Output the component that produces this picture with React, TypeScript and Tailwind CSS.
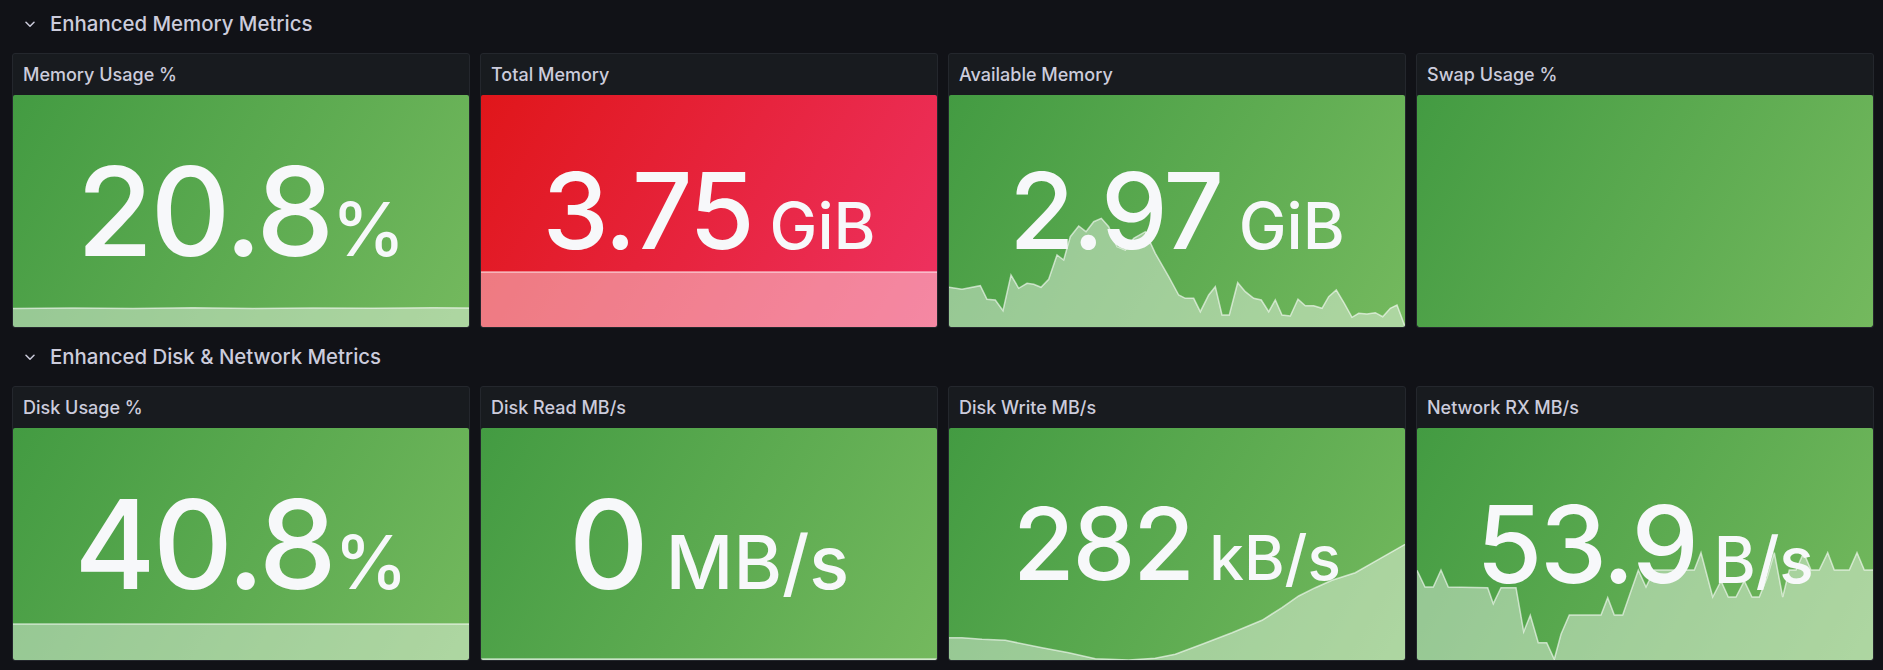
import React from "react";

const W = 456;
const H = 232;
type Pt = [number, number];

const availPts: Pt[] = [
  [0, 192.3], [13, 194.3], [31.3, 190.7], [38, 204.3], [46.3, 205], [54, 215.7], [62, 180], [69.7, 193.3],
  [78, 188.3], [84.7, 189.3], [92, 192.3], [99.7, 184.3], [108, 160], [114.7, 165], [121.3, 141.7],
  [129.7, 131], [137, 136.7], [144.7, 126.7], [152.3, 123.3], [159.7, 131.7], [168, 151.7], [176.3, 155],
  [184.7, 143.3], [196.3, 136.7], [206.3, 158.3], [219.7, 181.7], [229.7, 200], [236.3, 203.3],
  [244.7, 203.3], [251.3, 216.7], [259.7, 200], [266.3, 191.7], [273, 220], [280.3, 220], [288.7, 187.7],
  [296.3, 196.7], [304.7, 203.3], [312.3, 205], [319.7, 216.7], [326.3, 205], [333, 220], [341.3, 221],
  [349, 204.3], [356.3, 210.7], [364.7, 210.7], [373, 213.3], [379.7, 201.7], [387.3, 195], [395.3, 208.3],
  [403, 222.3], [409.7, 218.3], [418, 219], [426.3, 217.7], [433.7, 221.7], [441.3, 213.3], [448, 210],
  [456, 231.5],
];

const writePts: Pt[] = [
  [0, 209.7], [13, 209.7], [33, 211.3], [56.3, 212.3], [93, 219.7], [119.7, 224.7], [146.3, 230.7],
  [179.7, 232], [206.3, 230.3], [226.3, 226.3], [253, 216.3], [283, 204.7], [313, 192.3], [333, 179.7],
  [349.7, 168], [366.3, 159.7], [383, 152.3], [406.3, 144.7], [429.7, 131.3], [456, 116.3],
];

const netPts: Pt[] = [
  [0, 142.3], [8, 159], [16.3, 159], [24, 142], [31.3, 159], [70.7, 159.7], [76.3, 175.7], [84, 159.7],
  [99, 159.7], [106.7, 203.7], [113.3, 187.3], [121.3, 214.7], [129.7, 214.7], [137.3, 231.3], [144, 206.3],
  [152.3, 187], [184, 187], [190.7, 169.7], [197.3, 187], [205.7, 187], [214, 163], [221.3, 142.3],
  [229, 159], [237.3, 142], [250.7, 142], [267.3, 142], [277.3, 142], [284, 124.7], [295.7, 169],
  [304, 153], [311.3, 169], [319, 169], [327.3, 153], [335, 169], [342.3, 169], [350, 149.7], [357.3, 124.7],
  [365.7, 169], [372.3, 142], [379, 142], [386.7, 124.7], [394, 142], [402.3, 142], [410.7, 124.7],
  [417.3, 142], [432.3, 142], [440, 124.7], [447.3, 142], [456, 142],
];

const memPts: Pt[] = [
  [0, 213.5], [60, 213], [120, 213.6], [180, 212.8], [240, 213.4], [300, 212.9], [360, 213.3], [420, 212.7], [456, 213],
];
const totalPts: Pt[] = [[0, 177], [456, 177]];
const diskPts: Pt[] = [[0, 196], [456, 196]];
const readPts: Pt[] = [[0, 231], [456, 231]];

function Spark({ pts }: { pts: Pt[] }) {
  const line = pts.map((p, i) => `${i ? "L" : "M"}${p[0]},${p[1]}`).join(" ");
  const area = `${line} L${pts[pts.length - 1][0]},${H} L${pts[0][0]},${H} Z`;
  return (
    <svg
      className="absolute inset-0 h-full w-full"
      viewBox={`0 0 ${W} ${H}`}
      preserveAspectRatio="none"
    >
      <path d={area} fill="rgba(255,255,255,0.42)" />
      <path
        d={line}
        fill="none"
        stroke="rgba(255,255,255,0.6)"
        strokeWidth={1.5}
        vectorEffect="non-scaling-stroke"
      />
    </svg>
  );
}

type PanelProps = {
  title: string;
  red?: boolean;
  value?: string;
  unit?: string;
  valueClass?: string;
  unitClass?: string;
  pts?: Pt[];
};

function Panel({ title, red, value, unit, valueClass, unitClass, pts }: PanelProps) {
  return (
    <div className="flex h-[275px] flex-col overflow-hidden rounded-[3px] border border-[#24272d] bg-[#181b1f]">
      <div className="flex h-[41px] shrink-0 items-center px-[10px] text-[18px] font-medium text-[#ccccdc]">
        {title}
      </div>
      <div
        className={
          red
            ? "relative flex-1 rounded-[2px] bg-[linear-gradient(120deg,#e0161a,#ee3262)]"
            : "relative flex-1 rounded-[2px] bg-[linear-gradient(120deg,#439b42,#74b95e)]"
        }
      >
        {pts && <Spark pts={pts} />}
        {value !== undefined && (
          <div className="relative flex h-full items-center justify-center">
            <div className="flex items-baseline leading-none font-medium text-[#f7f8fa]">
              <span className={"tracking-[-0.022em] " + (valueClass ?? "")}>{value}</span>
              {unit && <span className={"whitespace-pre " + (unitClass ?? "")}>{unit}</span>}
            </div>
          </div>
        )}
      </div>
    </div>
  );
}

function RowHeader({ title, first }: { title: string; first?: boolean }) {
  return (
    <div
      className={
        first
          ? "flex h-[53px] items-center pb-[5px] pl-[13px]"
          : "flex h-[58px] items-center pl-[13px]"
      }
    >
      <svg width="10" height="7" viewBox="0 0 10 7" className="mr-[15px] shrink-0">
        <path d="M1 1.2 L5 5.2 L9 1.2" fill="none" stroke="#ccccdc" strokeWidth="1.5" strokeLinecap="round" strokeLinejoin="round" />
      </svg>
      <span className="text-[20.4px] font-medium text-[#ccccdc]">{title}</span>
    </div>
  );
}

export default function App() {
  return (
    <div className="min-h-[670px] w-full bg-[#111217] pl-[12px] pr-[9px] font-[Inter,sans-serif]">
      <RowHeader title="Enhanced Memory Metrics" first />
      <div className="grid grid-cols-4 gap-[10px]">
        <Panel title="Memory Usage %" value="20.8" unit="%" valueClass="text-[124px]" unitClass="text-[74px]" pts={memPts} />
        <Panel title="Total Memory" red value="3.75" unit=" GiB" valueClass="text-[106px]" unitClass="text-[64px]" pts={totalPts} />
        <Panel title="Available Memory" value="2.97" unit=" GiB" valueClass="text-[106px]" unitClass="text-[64px]" pts={availPts} />
        <Panel title="Swap Usage %" />
      </div>
      <RowHeader title="Enhanced Disk & Network Metrics" />
      <div className="grid grid-cols-4 gap-[10px]">
        <Panel title="Disk Usage %" value="40.8" unit="%" valueClass="text-[124px]" unitClass="text-[74px]" pts={diskPts} />
        <Panel title="Disk Read MB/s" value="0" unit=" MB/s" valueClass="text-[124px]" unitClass="text-[74px]" pts={readPts} />
        <Panel title="Disk Write MB/s" value="282" unit=" kB/s" valueClass="text-[100px]" unitClass="text-[62px]" pts={writePts} />
        <Panel title="Network RX MB/s" value="53.9" unit=" B/s" valueClass="text-[107px]" unitClass="text-[64px]" pts={netPts} />
      </div>
    </div>
  );
}
